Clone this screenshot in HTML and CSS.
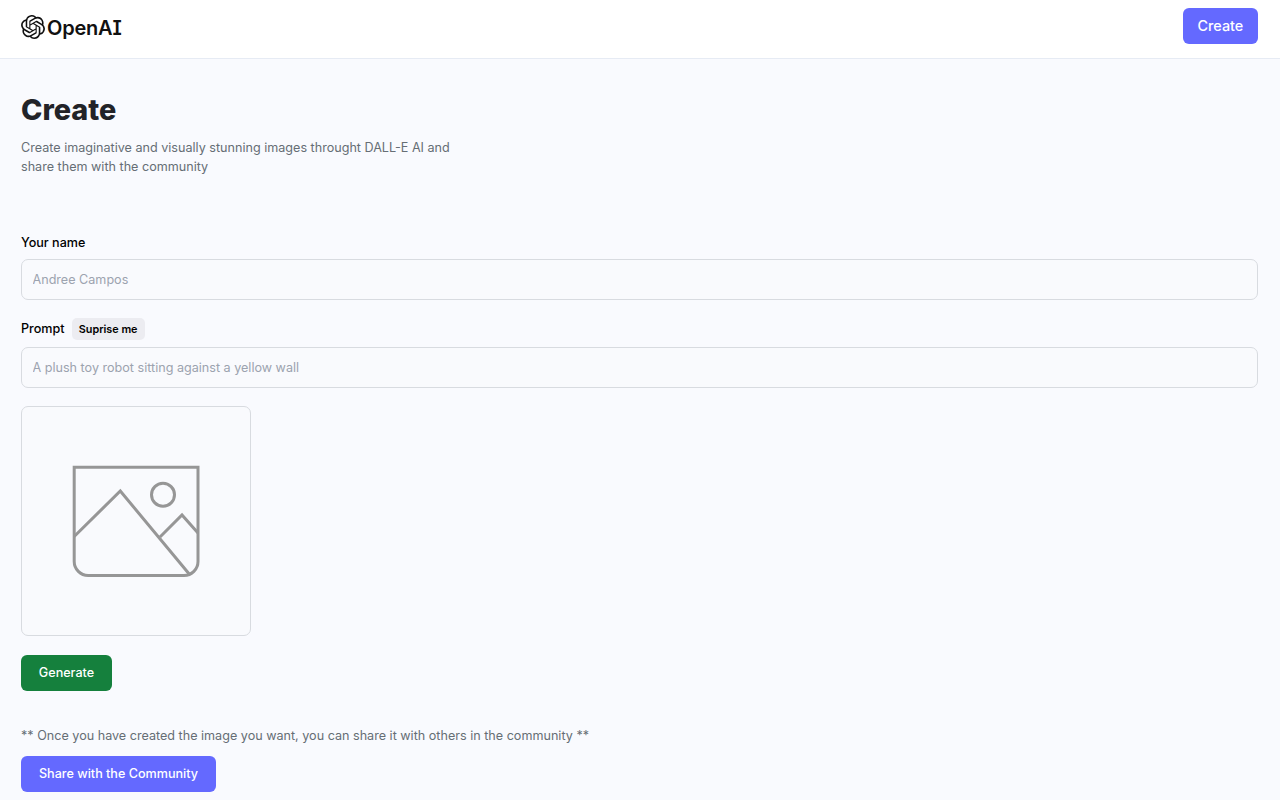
FILE: index.html
```html
<!DOCTYPE html>
<html lang="en">
<head>
<meta charset="utf-8">
<title>Create</title>
<link rel="stylesheet" href="styles.css">
</head>
<body>
<header class="topbar">
  <a class="brand" href="#">
    <svg class="brand-icon" viewBox="0 0 24 24" width="24" height="24" aria-hidden="true"><path fill="#111" d="M22.2819 9.8211a5.9847 5.9847 0 0 0-.5157-4.9108 6.0462 6.0462 0 0 0-6.5098-2.9A6.0651 6.0651 0 0 0 4.9807 4.1818a5.9847 5.9847 0 0 0-3.9977 2.9 6.0462 6.0462 0 0 0 .7427 7.0966 5.98 5.98 0 0 0 .511 4.9107 6.051 6.051 0 0 0 6.5146 2.9001A5.9847 5.9847 0 0 0 13.2599 24a6.0557 6.0557 0 0 0 5.7718-4.2058 5.9894 5.9894 0 0 0 3.9977-2.9001 6.0557 6.0557 0 0 0-.7475-7.0729zm-9.022 12.6081a4.4755 4.4755 0 0 1-2.8764-1.0408l.1419-.0804 4.7783-2.7582a.7948.7948 0 0 0 .3927-.6813v-6.7369l2.02 1.1686a.071.071 0 0 1 .038.052v5.5826a4.504 4.504 0 0 1-4.4945 4.4944zm-9.6607-4.1254a4.4708 4.4708 0 0 1-.5346-3.0137l.142.0852 4.783 2.7582a.7712.7712 0 0 0 .7806 0l5.8428-3.3685v2.3324a.0804.0804 0 0 1-.0332.0615L9.74 19.9502a4.4992 4.4992 0 0 1-6.1408-1.6464zM2.3408 7.8956a4.485 4.485 0 0 1 2.3655-1.9728V11.6a.7664.7664 0 0 0 .3879.6765l5.8144 3.3543-2.0201 1.1685a.0757.0757 0 0 1-.071 0l-4.8303-2.7865A4.504 4.504 0 0 1 2.3408 7.872zm16.5963 3.8558L13.1038 8.364 15.1192 7.2a.0757.0757 0 0 1 .071 0l4.8303 2.7913a4.4944 4.4944 0 0 1-.6765 8.1042v-5.6772a.79.79 0 0 0-.407-.667zm2.0107-3.0231l-.142-.0852-4.7735-2.7818a.7759.7759 0 0 0-.7854 0L9.409 9.2297V6.8974a.0662.0662 0 0 1 .0284-.0615l4.8303-2.7866a4.4992 4.4992 0 0 1 6.6802 4.66zM8.3065 12.863l-2.02-1.1638a.0804.0804 0 0 1-.038-.0567V6.0742a4.4992 4.4992 0 0 1 7.3757-3.4537l-.142.0805L8.704 5.459a.7948.7948 0 0 0-.3927.6813zm1.0976-2.3654l2.602-1.4998 2.6069 1.4998v2.9994l-2.5974 1.4997-2.6067-1.4997Z"/></svg>
    <span class="brand-name">OpenAI</span>
  </a>
  <a class="btn btn-primary btn-nav" href="#">Create</a>
</header>
<main class="page">
  <section class="intro">
    <h1 class="title">Create</h1>
    <p class="lead">Create imaginative and visually stunning images throught DALL-E AI and share them with the community</p>
  </section>
  <form class="form">
    <div class="field">
      <div class="field-head"><label class="label" for="name">Your name</label></div>
      <input class="input" id="name" type="text" placeholder="Andree Campos">
    </div>
    <div class="field field-prompt">
      <div class="field-head"><label class="label" for="prompt">Prompt</label><button class="chip" type="button">Suprise me</button></div>
      <input class="input" id="prompt" type="text" placeholder="A plush toy robot sitting against a yellow wall">
    </div>
    <div class="preview">
      <svg class="preview-icon" viewBox="0 0 128 114" width="128" height="114" aria-hidden="true">
        <g fill="none" stroke="#969696" stroke-width="3">
          <path d="M2.200 3.200H126V97.500A14 14 0 0 1 112 111.500H16.200A14 14 0 0 1 2.200 97.500Z"/>
          <circle cx="91" cy="30.700" r="11.500"/>
          <path d="M2.200 72.500L48.300 27L118 111"/>
          <path d="M88 73L110 51L126 69"/>
        </g>
      </svg>
    </div>
    <button class="btn btn-generate" type="button">Generate</button>
    <p class="note">** Once you have created the image you want, you can share it with others in the community **</p>
    <button class="btn btn-primary btn-share" type="button">Share with the Community</button>
  </form>
</main>
</body>
</html>
```
FILE: styles.css
```css
* { box-sizing: border-box; }
html, body { margin: 0; padding: 0; }
body {
  background: #f9fafe;
  font-family: Inter, "Liberation Sans", sans-serif;
  color: #000;
  height: 800px;
  overflow: hidden;
}
.topbar {
  display: flex;
  align-items: flex-start;
  justify-content: space-between;
  height: 59px;
  padding: 8px 22.4px 0 21px;
  background: #fff;
  border-bottom: 1px solid #e6ebf4;
}
.brand {
  display: flex;
  align-items: center;
  gap: 2px;
  margin-top: 5px;
  color: #111;
  text-decoration: none;
}
.brand-icon { display: block; }
.brand-name {
  margin-top: 3px;
  font-size: 20px;
  font-weight: 600;
  line-height: 24px;
  letter-spacing: -0.2px;
  font-feature-settings: "cv08", "ss02";
}
.btn {
  display: inline-flex;
  align-items: center;
  justify-content: center;
  border: 0;
  border-radius: 6px;
  color: #fff;
  font-family: inherit;
  font-weight: 500;
  font-size: 12.6px;
  text-decoration: none;
}
.btn-primary { background: #6469ff; }
.btn-nav { width: 74.5px; height: 36px; padding-bottom: 1px; font-size: 14.4px; }
.page { padding: 0 22.4px 0 21px; }
.intro { padding-top: 33px; }
.title {
  margin: 0;
  font-size: 28.8px;
  line-height: 36px;
  font-weight: 800;
  color: #222328;
}
.lead {
  margin: 10px 0 0;
  max-width: 450px;
  font-size: 12.6px;
  line-height: 19px;
  color: #666e75;
}
.form { display: flex; flex-direction: column; align-items: flex-start; margin-top: 56px; }
.field { width: 100%; margin-bottom: 18px; }
.field-head { display: flex; align-items: flex-start; gap: 7px; margin-bottom: 7px; height: 20px; }
.field-prompt .field-head { height: 22px; }
.label { font-size: 12.6px; line-height: 22px; font-weight: 500; color: #000; }
.chip {
  height: 22px;
  padding: 0 7.2px;
  border: 0;
  border-radius: 5px;
  background: #ececf1;
  color: #000;
  font-family: inherit;
  font-size: 10.8px;
  font-weight: 600;
}
.input {
  display: block;
  width: 100%;
  height: 41px;
  padding: 0 10.5px;
  border: 1px solid #d8dbe0;
  border-radius: 7px;
  background: #f9fafd;
  font-family: inherit;
  font-size: 12.6px;
  color: #111827;
}
.input::placeholder { color: #9ca3af; opacity: 1; }
.preview {
  display: flex;
  align-items: center;
  justify-content: center;
  width: 230px;
  height: 230px;
  border: 1px solid #d8dbe0;
  border-radius: 7px;
  background: #f9fafd;
}
.btn-generate { margin-top: 18.6px; width: 91px; height: 36px; background: #15803d; }
.note { margin: 35.4px 0 11px; font-size: 12.6px; line-height: 19px; color: #666e75; }
.btn-share { width: 195px; height: 36px; }
```
